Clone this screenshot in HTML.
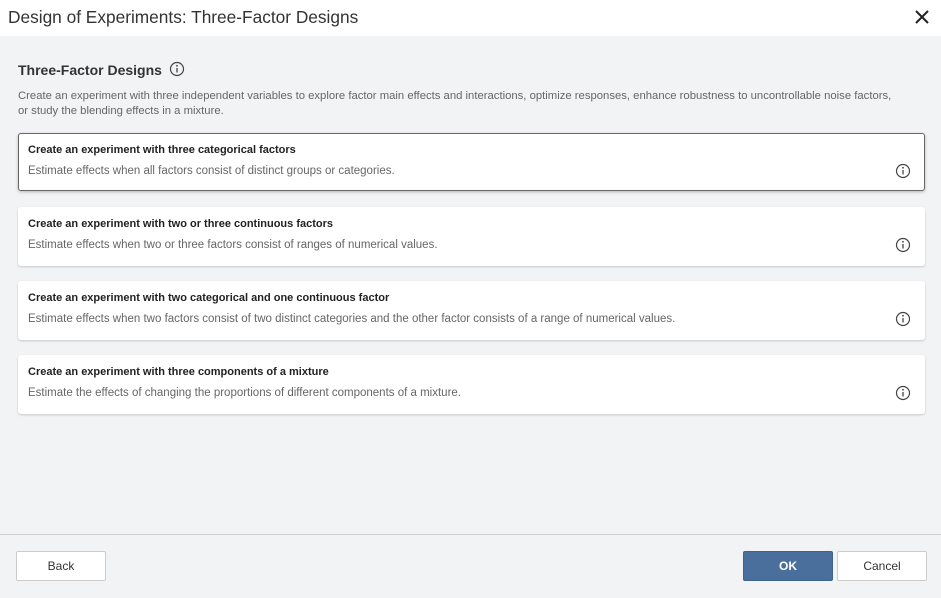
<!DOCTYPE html>
<html><head><style>
*{box-sizing:border-box;margin:0;padding:0}
body{width:941px;height:598px;background:#f2f3f5;font-family:"Liberation Sans",sans-serif;position:relative;overflow:hidden;color:#333}
.top{position:absolute;left:0;top:0;width:941px;height:36px;background:#fff}
.top h1{position:absolute;left:8px;top:7px;font-weight:normal;font-size:17.3px;color:#333}
.x{position:absolute;right:10px;top:8px}
h2{position:absolute;left:18px;top:61px;font-size:14px;font-weight:bold;color:#333}
.desc{position:absolute;left:18px;top:89px;font-size:11.3px;line-height:15px;color:#666;width:905px}
.card{position:absolute;left:18px;width:907px;background:#fff;border-radius:3px;box-shadow:0 1px 2px rgba(0,0,0,.18)}
.card.sel{border:1px solid #666;box-shadow:0 1px 3px rgba(0,0,0,.25)}
.card b{position:absolute;left:10px;top:11px;font-size:11px;color:#222}
.card span{position:absolute;left:10px;top:32px;font-size:11.5px;color:#666}
.card svg{position:absolute;right:14px;top:30px}
.foot{position:absolute;left:0;top:534px;width:941px;border-top:1px solid #d0d0d0}
.btn{position:absolute;top:551px;height:30px;border:1px solid #ccc;background:#fff;font-size:12px;text-align:center;line-height:28px;color:#333;border-radius:2px}
</style></head><body>
<div class="top"><h1>Design of Experiments: Three-Factor Designs</h1>
<svg class="x" width="18" height="18" viewBox="0 0 18 18"><path d="M3 3L15 15M15 3L3 15" stroke="#222" stroke-width="2"/></svg></div>
<h2>Three-Factor Designs <svg width="16" height="16" viewBox="0 0 16 16" style="vertical-align:-2px;margin-left:3px"><circle cx="8" cy="8" r="6.5" fill="none" stroke="#444" stroke-width="1.2"/><circle cx="8" cy="4.8" r="0.9" fill="#444"/><path d="M8 7v4.5" stroke="#444" stroke-width="1.3"/></svg></h2>
<div class="desc">Create an experiment with three independent variables to explore factor main effects and interactions, optimize responses, enhance robustness to uncontrollable noise factors,<br>or study the blending effects in a mixture.</div>

<div class="card sel" style="top:133px;height:58px"><b style="left:9px;top:10px">Create an experiment with three categorical factors</b><span style="left:9px;top:31px">Estimate effects when all factors consist of distinct groups or categories.</span><svg style="right:13px;top:29px" width="16" height="16" viewBox="0 0 16 16"><circle cx="8" cy="8" r="6.5" fill="none" stroke="#444" stroke-width="1.2"/><circle cx="8" cy="4.8" r="0.9" fill="#444"/><path d="M8 7v4.5" stroke="#444" stroke-width="1.3"/></svg></div>
<div class="card" style="top:207px;height:59px"><b>Create an experiment with two or three continuous factors</b><span>Estimate effects when two or three factors consist of ranges of numerical values.</span><svg width="16" height="16" viewBox="0 0 16 16"><circle cx="8" cy="8" r="6.5" fill="none" stroke="#444" stroke-width="1.2"/><circle cx="8" cy="4.8" r="0.9" fill="#444"/><path d="M8 7v4.5" stroke="#444" stroke-width="1.3"/></svg></div>
<div class="card" style="top:281px;height:59px"><b>Create an experiment with two categorical and one continuous factor</b><span>Estimate effects when two factors consist of two distinct categories and the other factor consists of a range of numerical values.</span><svg width="16" height="16" viewBox="0 0 16 16"><circle cx="8" cy="8" r="6.5" fill="none" stroke="#444" stroke-width="1.2"/><circle cx="8" cy="4.8" r="0.9" fill="#444"/><path d="M8 7v4.5" stroke="#444" stroke-width="1.3"/></svg></div>
<div class="card" style="top:355px;height:59px"><b>Create an experiment with three components of a mixture</b><span>Estimate the effects of changing the proportions of different components of a mixture.</span><svg width="16" height="16" viewBox="0 0 16 16"><circle cx="8" cy="8" r="6.5" fill="none" stroke="#444" stroke-width="1.2"/><circle cx="8" cy="4.8" r="0.9" fill="#444"/><path d="M8 7v4.5" stroke="#444" stroke-width="1.3"/></svg></div>

<div class="foot"></div>
<div class="btn" style="left:16px;width:90px">Back</div>
<div class="btn" style="left:743px;width:90px;background:#4a6f9c;border-color:#3f628d;color:#fff;font-weight:bold">OK</div>
<div class="btn" style="left:837px;width:90px">Cancel</div>
</body></html>
